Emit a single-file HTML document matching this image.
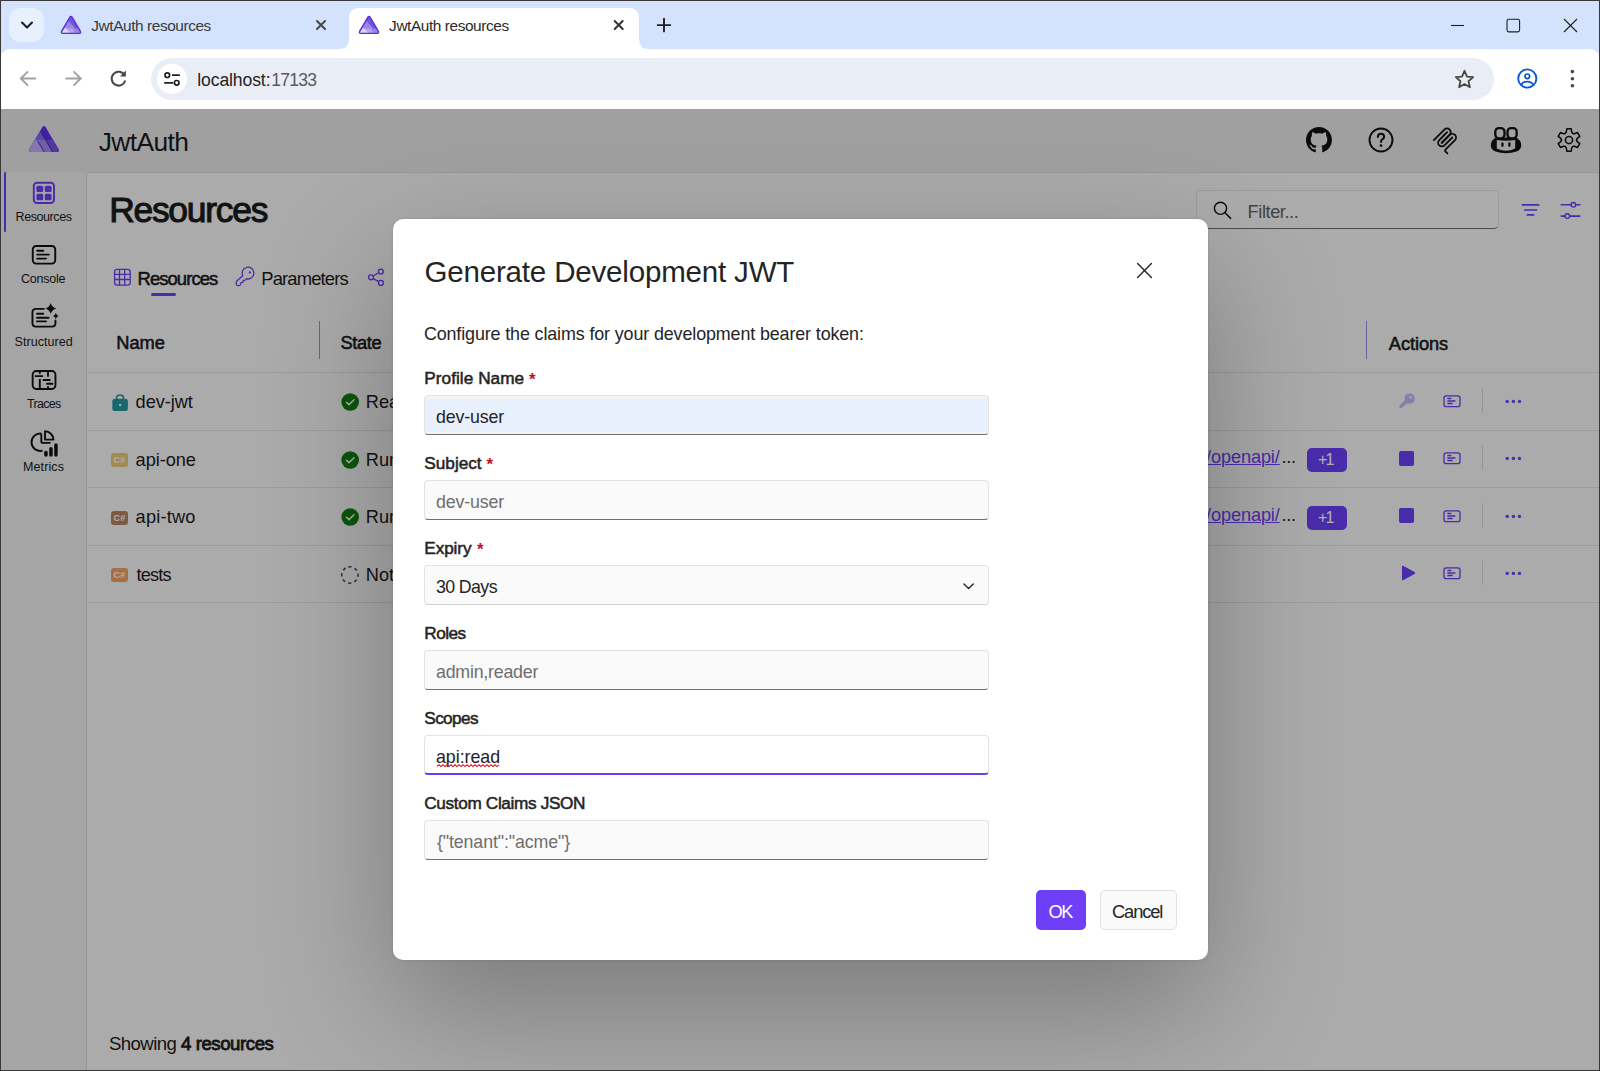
<!DOCTYPE html><html><head><meta charset='utf-8'><title>JwtAuth resources</title><style>
*{box-sizing:border-box;margin:0;padding:0}
html,body{width:1600px;height:1071px;overflow:hidden;background:#fff;font-family:"Liberation Sans",sans-serif}
.a{position:absolute}
.t{position:absolute;white-space:pre}
svg{position:absolute;overflow:visible}
</style></head><body><div class=a style='left:0;top:0;width:1600px;height:70px;background:#d3e3fd'></div><div class=a style='left:9px;top:8px;width:35px;height:34px;border-radius:12px;background:#e8f0fe'></div><svg style='left:0;top:0' width=60 height=50><path d='M22 22.6 L27 27.6 L32 22.6' fill=none stroke='#1f1f1f' stroke-width=2.1 stroke-linecap=round stroke-linejoin=round /></svg><svg style='left:60px;top:15px' width=22 height=20 viewBox='0 0 22 20'><defs><clipPath id='fc60'><path d='M9.9 2.2 Q11 0.4 12.1 2.2 L20.4 16.4 Q21.2 18.3 19.1 18.3 L2.9 18.3 Q0.8 18.3 1.6 16.4 Z' /></clipPath></defs><g clip-path='url(#fc60)'><rect x=0 y=0 width=22 height=20 fill='#7352e2' /><rect x=0 y=13.5 width=22 height=7 fill='#9a82ea' /><path d='M8.6 6 L15.2 13.5 L0 20 L0 13 Z' fill='#9c84ea' /><path d='M4 13.5 L12.6 13.5 L16.6 20 L0 20 Z' fill='#b6a6f0' /><path d='M5.2 12.6 L11.8 20 L0 20 Z' fill='#ddd4f8' /></g><path d='M9.9 2.2 Q11 0.4 12.1 2.2 L20.4 16.4 Q21.2 18.3 19.1 18.3 L2.9 18.3 Q0.8 18.3 1.6 16.4 Z' fill=none stroke='#5530d8' stroke-width=1.35 /></svg><span class=t style="left:91.30px;top:17.56px;font-size:15.4px;line-height:15.4px;font-weight:400;color:#3a3a3a;letter-spacing:-0.412px;">JwtAuth resources</span><svg style='left:0;top:0' width=340 height=50><path d='M317 21 L325 29 M325 21 L317 29' stroke='#474747' stroke-width=2 stroke-linecap=round /></svg><svg style='left:330px;top:0' width=330 height=50 viewBox='330 0 330 50'><path d='M339 49 Q349 49 349 39 L349 18 Q349 8 359 8 L629 8 Q639 8 639 18 L639 39 Q639 49 649 49 Z' fill='#fff' /></svg><svg style='left:358px;top:15px' width=22 height=20 viewBox='0 0 22 20'><defs><clipPath id='fc358'><path d='M9.9 2.2 Q11 0.4 12.1 2.2 L20.4 16.4 Q21.2 18.3 19.1 18.3 L2.9 18.3 Q0.8 18.3 1.6 16.4 Z' /></clipPath></defs><g clip-path='url(#fc358)'><rect x=0 y=0 width=22 height=20 fill='#7352e2' /><rect x=0 y=13.5 width=22 height=7 fill='#9a82ea' /><path d='M8.6 6 L15.2 13.5 L0 20 L0 13 Z' fill='#9c84ea' /><path d='M4 13.5 L12.6 13.5 L16.6 20 L0 20 Z' fill='#b6a6f0' /><path d='M5.2 12.6 L11.8 20 L0 20 Z' fill='#ddd4f8' /></g><path d='M9.9 2.2 Q11 0.4 12.1 2.2 L20.4 16.4 Q21.2 18.3 19.1 18.3 L2.9 18.3 Q0.8 18.3 1.6 16.4 Z' fill=none stroke='#5530d8' stroke-width=1.35 /></svg><span class=t style="left:389.10px;top:17.56px;font-size:15.4px;line-height:15.4px;font-weight:400;color:#2a2a2a;letter-spacing:-0.412px;">JwtAuth resources</span><svg style='left:0;top:0' width=700 height=50><path d='M614.7 21 L622.7 29 M622.7 21 L614.7 29' stroke='#333' stroke-width=2 stroke-linecap=round /></svg><svg style='left:0;top:0' width=700 height=50><path d='M664 18.8 L664 31.4 M657.7 25.1 L670.3 25.1' stroke='#1f1f1f' stroke-width=1.9 stroke-linecap=round /></svg><svg style='left:1400px;top:0' width=200 height=50 viewBox='1400 0 200 50'><path d='M1451 25.5 L1464 25.5' stroke='#1f1f1f' stroke-width=1.1 /><rect x=1507 y=19.3 width=12.6 height=12.6 rx=1.8 fill=none stroke='#1f1f1f' stroke-width=1.1 /><path d='M1564 19 L1577 32 M1577 19 L1564 32' stroke='#1f1f1f' stroke-width=1.1 /></svg><div class=a style='left:0;top:49px;width:1600px;height:60px;background:#fff;border-radius:10px 10px 0 0'></div><svg style='left:0;top:49px' width=150 height=60 viewBox='0 49 150 60'><path d='M21 78.5 L36 78.5 M28 71.3 L20.8 78.5 L28 85.7' fill=none stroke='#a1a1a1' stroke-width=1.9 stroke-linejoin=miter /><path d='M80.5 78.5 L65.5 78.5 M73.5 71.3 L80.7 78.5 L73.5 85.7' fill=none stroke='#a1a1a1' stroke-width=1.9 /><path d='M124.6 75.2 A6.9 6.9 0 1 0 125.3 80.5' fill=none stroke='#474747' stroke-width=2 /><path d='M125.9 70.6 L125.9 76.4 L120.1 76.4 Z' fill='#474747' /></svg><div class=a style='left:151px;top:58px;width:1343px;height:42px;border-radius:21px;background:#e9eef6'></div><div class=a style='left:157px;top:64px;width:30px;height:30px;border-radius:15px;background:#fff'></div><svg style='left:150px;top:60px' width=40 height=40 viewBox='150 60 40 40'><circle cx=167.3 cy=75.2 r=2.3 fill=none stroke='#1f1f1f' stroke-width=1.7 /><path d='M172 75.2 L179.8 75.2 M164.2 82.8 L173.2 82.8' stroke='#1f1f1f' stroke-width=1.8 /><circle cx=176.7 cy=82.8 r=2.3 fill=none stroke='#1f1f1f' stroke-width=1.7 /></svg><span class=t style="left:197.30px;top:71.80px;font-size:17.6px;line-height:17.6px;font-weight:400;color:#1f1f1f;letter-spacing:-0.122px;">localhost:</span><span class=t style="left:271.20px;top:71.80px;font-size:17.6px;line-height:17.6px;font-weight:400;color:#5a5a5a;letter-spacing:-0.800px;">17133</span><svg style='left:1440px;top:60px' width=50 height=40 viewBox='1440 60 50 40'><path d='M1464.5 70.8 L1467 76.6 L1473.2 77.1 L1468.5 81.2 L1469.9 87.3 L1464.5 84.1 L1459.1 87.3 L1460.5 81.2 L1455.8 77.1 L1462 76.6 Z' fill=none stroke='#474747' stroke-width=1.8 stroke-linejoin=round /></svg><svg style='left:1500px;top:60px' width=100 height=40 viewBox='1500 60 100 40'><circle cx=1527.3 cy=78.5 r=9.1 fill=none stroke='#0b57d0' stroke-width=1.9 /><circle cx=1527.3 cy=76.3 r=2.3 fill=none stroke='#0b57d0' stroke-width=1.7 /><path d='M1521.3 84.8 Q1523 81.6 1527.3 81.6 Q1531.6 81.6 1533.3 84.8' fill=none stroke='#0b57d0' stroke-width=1.7 /><circle cx=1572.4 cy=71.6 r=1.8 fill='#474747' /><circle cx=1572.4 cy=78.7 r=1.8 fill='#474747' /><circle cx=1572.4 cy=85.7 r=1.8 fill='#474747' /></svg><div class=a style='left:0;top:109px;width:1600px;height:962px;background:#e5e5e5'></div><div class=a style='left:0;top:172px;width:87px;height:899px;background:#ececec'></div><div class=a style='left:86px;top:172px;width:1514px;height:899px;background:#f5f5f5;border-left:1px solid #d8d8d8;border-top:1px solid #d8d8d8'></div><svg style='left:24px;top:120px' width=40 height=36 viewBox='24 120 40 36'><defs><clipPath id='lg'><path d='M42.3 127.2 Q44 124.6 45.7 127.2 L58.6 149.2 Q59.9 151.9 57 151.9 L31 151.9 Q28.1 151.9 29.4 149.2 Z' /></clipPath></defs><g clip-path='url(#lg)'><rect x=24 y=120 width=40 height=36 fill='#5a30e8' /><rect x=24 y=139.8 width=40 height=16 fill='#7650e6' /><path d='M38.8 133.6 Q40.3 131.2 41.9 133.6 L53 152.5 L20 152.5 Z' fill='#8066ee' /><path d='M31 139.8 L45.3 139.8 L52.7 152.5 L20 152.5 Z' fill='#9e88ee' /><path d='M34.7 141 Q36.1 138.8 37.6 141 L44.6 152.5 L20 152.5 Z' fill='#c0acf6' /><path d='M41.9 133.6 L53 152.5 M37.6 141 L44.6 152.5' fill=none stroke='#3a2290' stroke-width=0.9 /></g></svg><span class=t style="left:98.70px;top:129.35px;font-size:26.4px;line-height:26.4px;font-weight:400;color:#1a1a1a;letter-spacing:-0.617px;">JwtAuth</span><svg style='left:1306px;top:127px' width=26 height=26 viewBox='0 0 16 16'><path fill='#111' d='M8 0C3.58 0 0 3.58 0 8c0 3.54 2.29 6.53 5.470 7.59.4.07.55-.17.55-.38 0-.19-.01-.82-.01-1.49-2.01.37-2.53-.49-2.69-.94-.09-.23-.48-.94-.82-1.13-.28-.15-.68-.52-.01-.53.63-.01 1.08.58 1.23.82.72 1.21 1.87.87 2.33.66.07-.52.28-.87.51-1.07-1.78-.2-3.64-.89-3.64-3.950 0-.87.31-1.59.82-2.15-.08-.2-.36-1.02.08-2.12 0 0 .67-.21 2.2.82.64-.18 1.32-.27 2-.27.68 0 1.36.09 2 .27 1.53-1.04 2.2-.82 2.2-.82.44 1.1.16 1.92.08 2.12.51.56.82 1.27.82 2.15 0 3.07-1.87 3.75-3.65 3.95.29.25.54.73.54 1.48 0 1.07-.01 1.93-.01 2.2 0 .21.15.46.55.38A8.013 8.013 0 0016 8c0-4.42-3.58-8-8-8z' /></svg><svg style='left:1366px;top:125px' width=30 height=30 viewBox='0 0 30 30'><circle cx=15 cy=15 r=11.5 fill=none stroke='#111' stroke-width=1.9 /><path d='M11.9 12 Q11.9 8.8 15 8.8 Q18.1 8.8 18.1 11.7 Q18.1 13.4 16.3 14.4 Q15 15.1 15 17' fill=none stroke='#111' stroke-width=2 stroke-linecap=round /><circle cx=15 cy=20.6 r=1.35 fill='#111' /></svg><svg style='left:1429.6px;top:124.9px' width=30.2 height=30.2 viewBox='0 0 195 195'><g fill=none stroke='#111' stroke-width=12 stroke-linecap=round><path d='M25 97.85L92.88 29.97C102.26 20.6 117.45 20.6 126.82 29.97C136.2 39.34 136.2 54.54 126.82 63.91L75.56 115.18' /><path d='M76.27 114.47L126.82 63.91C136.2 54.54 151.39 54.54 160.77 63.91L161.12 64.27C170.49 73.64 170.49 88.83 161.12 98.21L99.72 159.6C96.6 162.72 96.6 167.79 99.72 170.91L112.33 183.52' /><path d='M109.85 46.94L59.65 97.15C50.28 106.52 50.28 121.71 59.65 131.09C69.02 140.46 84.22 140.46 93.59 131.09L143.79 80.88' /></g></svg><svg style='left:1486px;top:120px' width=40 height=40 viewBox='1486 120 40 40'><path fill='#111' d='M1496 137.6 L1516 137.6 Q1521.2 140.2 1521.2 145.4 Q1521.2 149.4 1516.4 151.4 Q1511.4 153.2 1506 153.2 Q1500.6 153.2 1495.6 151.4 Q1490.8 149.4 1490.8 145.4 Q1490.8 140.2 1496 137.6 Z' /><path fill='#e5e5e5' d='M1496.8 140 Q1506 141.6 1515.2 140 L1515.2 148.6 Q1510.6 150.8 1506 150.8 Q1501.4 150.8 1496.8 148.6 Z' /><rect x=1495.3 y=128.1 width=9.2 height=10.2 rx=3.6 fill='#e5e5e5' stroke='#111' stroke-width=2.3 /><rect x=1507.5 y=128.1 width=9.2 height=10.2 rx=3.6 fill='#e5e5e5' stroke='#111' stroke-width=2.3 /><rect x=1501.3 y=142.3 width=2.3 height=4.6 rx=1.15 fill='#111' /><rect x=1508.2 y=142.3 width=2.3 height=4.6 rx=1.15 fill='#111' /></svg><svg style='left:1549px;top:120px' width=40 height=40 viewBox='-20 -20 40 40'><path fill=none stroke='#111' stroke-width=1.55 stroke-linejoin=round d='M-2.73 -7.94 L-2.18 -11.19 L2.18 -11.19 L2.73 -7.94 Q3.40 -5.89 5.51 -6.34 L5.51 -6.34 L8.60 -7.48 L10.78 -3.71 L8.25 -1.60 Q6.80 0.00 8.25 1.60 L8.25 1.60 L10.78 3.71 L8.60 7.48 L5.51 6.34 Q3.40 5.89 2.73 7.94 L2.73 7.94 L2.18 11.19 L-2.18 11.19 L-2.73 7.94 Q-3.40 5.89 -5.51 6.34 L-5.51 6.34 L-8.60 7.48 L-10.78 3.71 L-8.25 1.60 Q-6.80 0.00 -8.25 -1.60 L-8.25 -1.60 L-10.78 -3.71 L-8.60 -7.48 L-5.51 -6.34 Q-3.40 -5.89 -2.73 -7.94 Z' /><circle cx=0 cy=0 r=3.6 fill=none stroke='#111' stroke-width=1.55 /></svg><div class=a style='left:4px;top:172px;width:2px;height:60px;border-radius:1px;background:#6b3ef5'></div><svg style='left:32px;top:181px' width=24 height=24 viewBox='0 0 24 24'><rect x=1.8 y=1.8 width=20.2 height=20.2 rx=3.3 fill=none stroke='#6b3ef5' stroke-width=1.9 /><rect x=4.4 y=4.7 width=6.8 height=6.3 rx=1.6 fill='#6b3ef5' /><rect x=12.8 y=4.7 width=6.8 height=6.3 rx=1.6 fill='#6b3ef5' /><rect x=4.4 y=12.8 width=6.8 height=6.5 rx=1.6 fill='#6b3ef5' /><rect x=12.8 y=12.8 width=6.8 height=6.5 rx=1.6 fill='#6b3ef5' /></svg><span class=t style="left:15.60px;top:211.42px;font-size:12.5px;line-height:12.5px;font-weight:400;color:#1a1a1a;letter-spacing:-0.425px;">Resources</span><svg style='left:30px;top:243px' width=30 height=24 viewBox='30 243 30 24'><rect x=32.75 y=246 width=22.5 height=17.6 rx=3.5 fill=none stroke='#111' stroke-width=1.9 /><path d='M37.2 250.7 L43.3 250.7 M37.2 254.6 L48.8 254.6 M37.2 258.6 L46 258.6' stroke='#111' stroke-width=1.9 stroke-linecap=round /></svg><span class=t style="left:20.90px;top:273.12px;font-size:12.5px;line-height:12.5px;font-weight:400;color:#1a1a1a;letter-spacing:-0.217px;">Console</span><svg style='left:28px;top:300px' width=34 height=30 viewBox='28 300 34 30'><path d='M43.8 308.85 L36 308.85 Q32.45 308.85 32.45 312.4 L32.45 323.1 Q32.45 326.65 36 326.65 L51.9 326.65 Q55.45 326.65 55.45 323.1 L55.45 320.4' fill=none stroke='#111' stroke-width=1.9 stroke-linecap=round /><path d='M37 313.8 L43.3 313.8 M37 317.7 L48.6 317.7 M37 321.4 L46 321.4' stroke='#111' stroke-width=1.9 stroke-linecap=round /><path d='M50.7 302.9 Q51.9 307.2 56.3 308.4 Q51.9 309.6 50.7 313.8 Q49.5 309.6 45.2 308.4 Q49.5 307.2 50.7 302.9 Z' fill='#111' /><path d='M55.8 313.1 Q56.5 315.5 58.8 316.1 Q56.5 316.7 55.8 319 Q55.1 316.7 52.9 316.1 Q55.1 315.5 55.8 313.1 Z' fill='#111' /></svg><span class=t style="left:14.50px;top:336.42px;font-size:12.5px;line-height:12.5px;font-weight:400;color:#1a1a1a;letter-spacing:0.056px;">Structured</span><svg style='left:30px;top:368px' width=30 height=24 viewBox='30 368 30 24'><rect x=32.65 y=371.05 width=22.8 height=17.9 rx=3.6 fill=none stroke='#111' stroke-width=1.9 /><path d='M39.8 371.5 L39.8 373.8 M39.8 379.1 L39.8 388.5 M48 371.5 L48 376.8 M48 386.2 L48 388.5' stroke='#111' stroke-width=1.9 /><path d='M35.6 376.1 L42.4 376.1 M43.4 380 L49.8 380 M47 383.8 L52.4 383.8' stroke='#111' stroke-width=1.9 stroke-linecap=round /></svg><span class=t style="left:27.00px;top:398.42px;font-size:12.5px;line-height:12.5px;font-weight:400;color:#1a1a1a;letter-spacing:-0.720px;">Traces</span><svg style='left:30px;top:426px' width=32 height=32 viewBox='30 426 32 32'><path d='M41.3 433.6 A8.7 8.7 0 1 0 42.6 450.6' fill=none stroke='#111' stroke-width=1.9 stroke-linecap=butt /><path d='M41.3 433.6 L41.3 441.2 Q41.3 442.9 43 442.9 L50.6 442.9' fill=none stroke='#111' stroke-width=1.9 stroke-linejoin=round /><path d='M45 431.3 L45 439.6 L53.4 439.6 A8.4 8.4 0 0 0 45 431.3 Z' fill=none stroke='#111' stroke-width=1.9 stroke-linejoin=round /><rect x=44.2 y=450.8 width=3.5 height=5.9 rx=1.75 fill='#111' /><rect x=49.2 y=447 width=3.5 height=9.7 rx=1.75 fill='#111' /><rect x=54.2 y=443.2 width=3.5 height=13.5 rx=1.75 fill='#111' /></svg><span class=t style="left:23.00px;top:461.22px;font-size:12.5px;line-height:12.5px;font-weight:400;color:#1a1a1a;letter-spacing:0.100px;">Metrics</span><span class=t style="left:109.20px;top:192.63px;font-size:35.4px;line-height:35.4px;font-weight:400;-webkit-text-stroke:1.06px #1a1a1a;color:#1a1a1a;letter-spacing:-1.250px;">Resources</span><div class=a style='left:1196px;top:190px;width:303px;height:39px;border-radius:5px;background:#f7f7f7;border:1px solid #e0e0e0;border-bottom:1px solid #6b6b6b'></div><svg style='left:1210px;top:199px' width=26 height=26 viewBox='1210 199 26 26'><circle cx=1220.5 cy=208.3 r=6.1 fill=none stroke='#111' stroke-width=1.4 /><path d='M1225 212.8 L1230.6 218.4' stroke='#111' stroke-width=1.5 stroke-linecap=round /></svg><span class=t style="left:1247.60px;top:203.19px;font-size:18.2px;line-height:18.2px;font-weight:400;color:#616161;letter-spacing:-0.425px;">Filter...</span><svg style='left:1515px;top:198px' width=70 height=26 viewBox='1515 198 70 26'><path d='M1522.4 204.8 L1538.7 204.8 M1524.8 210 L1536.4 210 M1527.4 214.9 L1533.6 214.9' stroke='#6b3ef5' stroke-width=1.7 stroke-linecap=round /><path d='M1561.2 204.8 L1570.9 204.8 M1575.9 204.8 L1579.9 204.8 M1561.2 216.1 L1564.8 216.1 M1569.8 216.1 L1579.9 216.1' stroke='#6b3ef5' stroke-width=1.6 stroke-linecap=round /><circle cx=1573.4 cy=204.8 r=2.3 fill=none stroke='#6b3ef5' stroke-width=1.4 /><circle cx=1567.3 cy=216.1 r=2.3 fill=none stroke='#6b3ef5' stroke-width=1.4 /></svg><svg style='left:110px;top:265px' width=150 height=25 viewBox='110 265 150 25'><rect x=114.6 y=269.3 width=15.6 height=15.9 rx=2.6 fill=none stroke='#6b3ef5' stroke-width=1.3 /><path d='M119.5 269.5 L119.5 285 M124.7 269.5 L124.7 285 M114.8 274.3 L130 274.3 M114.8 279.5 L130 279.5' stroke='#6b3ef5' stroke-width=1.3 /></svg><span class=t style="left:137.50px;top:270.12px;font-size:18.4px;line-height:18.4px;font-weight:400;-webkit-text-stroke:0.55px #1a1a1a;color:#1a1a1a;letter-spacing:-0.900px;">Resources</span><div class=a style='left:151px;top:293px;width:25px;height:3px;border-radius:1.5px;background:#6b3ef5'></div><svg style='left:232px;top:264px' width=26 height=26 viewBox='232 264 26 26'><path d='M242.7 275.7 A5.9 5.9 0 1 1 246.5 278.8 L245.3 280.1 L243.3 280.3 L243 282.4 L240.9 282.6 L240.6 284.4 Q240.2 285.7 238.9 285.7 L237.8 285.7 Q236.3 285.5 236.2 284 L236.2 282.5 Q236.3 281.7 236.9 281.1 Z' fill=none stroke='#6b3ef5' stroke-width=1.3 stroke-linejoin=round /><circle cx=249.9 cy=272.5 r=1.15 fill='#6b3ef5' /></svg><span class=t style="left:261.30px;top:270.12px;font-size:18.4px;line-height:18.4px;font-weight:400;color:#1a1a1a;letter-spacing:-0.856px;">Parameters</span><svg style='left:365px;top:264px' width=24 height=26 viewBox='365 264 24 26'><circle cx=380.9 cy=271.5 r=2.45 fill=none stroke='#6b3ef5' stroke-width=1.3 /><circle cx=371 cy=277.3 r=2.45 fill=none stroke='#6b3ef5' stroke-width=1.3 /><circle cx=380.9 cy=282.9 r=2.45 fill=none stroke='#6b3ef5' stroke-width=1.3 /><path d='M373.2 276 L378.7 272.8 M373.2 278.6 L378.7 281.6' stroke='#6b3ef5' stroke-width=1.3 /></svg><span class=t style="left:116.30px;top:334.41px;font-size:18.3px;line-height:18.3px;font-weight:400;-webkit-text-stroke:0.55px #1a1a1a;color:#1a1a1a;letter-spacing:-0.033px;">Name</span><div class=a style='left:319px;top:321px;width:1px;height:38px;background:#9c86e8'></div><span class=t style="left:340.50px;top:334.41px;font-size:18.3px;line-height:18.3px;font-weight:400;-webkit-text-stroke:0.55px #1a1a1a;color:#1a1a1a;letter-spacing:-0.400px;">State</span><div class=a style='left:1366px;top:321px;width:1px;height:38px;background:#9c86e8'></div><span class=t style="left:1388.80px;top:334.51px;font-size:18.3px;line-height:18.3px;font-weight:400;-webkit-text-stroke:0.55px #1a1a1a;color:#1a1a1a;letter-spacing:-0.083px;">Actions</span><div class=a style='left:87px;top:372.0px;width:1513px;height:1px;background:#dedede'></div><div class=a style='left:87px;top:429.5px;width:1513px;height:1px;background:#dedede'></div><div class=a style='left:87px;top:487.0px;width:1513px;height:1px;background:#dedede'></div><div class=a style='left:87px;top:544.5px;width:1513px;height:1px;background:#dedede'></div><div class=a style='left:87px;top:602.0px;width:1513px;height:1px;background:#dedede'></div><svg style='left:100px;top:382.5px' width=40 height=40 viewBox='100 382.5 40 40'><path d='M116.6 398.7 L116.6 397.1 Q116.6 394.5 120 394.5 Q123.4 394.5 123.4 397.1 L123.4 398.7' fill=none stroke='#25969c' stroke-width=1.7 /><rect x=112.3 y=398.2 width=15.6 height=12.4 rx=2.8 fill='#25969c' /><circle cx=120.1 cy=404.5 r=1.25 fill='#f5f5f5' /></svg><span class=t style="left:135.60px;top:393.09px;font-size:18.2px;line-height:18.2px;font-weight:400;color:#1a1a1a;letter-spacing:-0.067px;">dev-jwt</span><svg style='left:336px;top:388.0px' width=28 height=28 viewBox='336 388.0 28 28'><circle cx=350.2 cy=402.0 r=8.8 fill='#107c10' /><path d='M346.4 402.2 L349 404.6 L354 399.7' fill=none stroke='#f5f5f5' stroke-width=1.5 stroke-linecap=round stroke-linejoin=round /></svg><span class=t style="left:365.80px;top:393.09px;font-size:18.2px;line-height:18.2px;font-weight:400;color:#1a1a1a;letter-spacing:0.000px;">Ready</span><svg style='left:1390px;top:386.7px' width=30 height=28 viewBox='1390 386.7 30 28'><path d='M1409.6 393.09999999999997 Q1414.6 393.09999999999997 1414.6 398.09999999999997 Q1414.6 403.09999999999997 1409.6 403.09999999999997 Q1408.6 403.09999999999997 1407.8 402.7 L1406.4 404.09999999999997 L1404.6 404.3 L1404.4 406.09999999999997 L1402.6 406.3 L1401.6 407.5 Q1400.2 408.5 1399.4 407.3 Q1398.8 406.3 1399.6 405.3 L1404.9 399.9 Q1404.6 399.09999999999997 1404.6 398.09999999999997 Q1404.6 393.09999999999997 1409.6 393.09999999999997 Z' fill='#c2b2f4' /><circle cx=1410.6 cy=396.9 r=1.3 fill='#f5f5f5' /></svg><svg style='left:1438px;top:388.7px' width=28 height=24 viewBox='1438 388.7 28 24'><rect x=1444 y=395.5 width=16 height=10.8 rx=2.2 fill=none stroke='#6b3ef5' stroke-width=1.3 /><path d='M1447.4 398.09999999999997 L1451.4 398.09999999999997 M1447.4 400.7 L1455.4 400.7 M1447.4 403.09999999999997 L1452.6 403.09999999999997' stroke='#6b3ef5' stroke-width=1.5 /></svg><div class=a style='left:1482px;top:388.2px;width:1px;height:24.6px;background:#d4d4d4'></div><svg style='left:1500px;top:395.7px' width=30 height=10 viewBox='1500 395.7 30 10'><circle cx=1507.2 cy=401.09999999999997 r=1.7 fill='#6b3ef5' /><circle cx=1513.4 cy=401.09999999999997 r=1.7 fill='#6b3ef5' /><circle cx=1519.5 cy=401.09999999999997 r=1.7 fill='#6b3ef5' /></svg><div class=a style='left:111px;top:453.0px;width:16.8px;height:14px;border-radius:3px;background:#e9c872'></div><div class=a style='left:111px;top:453.0px;width:16.8px;height:14px;font:bold 9px/14px "Liberation Sans";color:#fafafa;text-align:center;letter-spacing:.2px'>C#</div><span class=t style="left:135.60px;top:450.59px;font-size:18.2px;line-height:18.2px;font-weight:400;color:#1a1a1a;letter-spacing:-0.050px;">api-one</span><svg style='left:336px;top:445.5px' width=28 height=28 viewBox='336 445.5 28 28'><circle cx=350.2 cy=459.5 r=8.8 fill='#107c10' /><path d='M346.4 459.7 L349 462.1 L354 457.2' fill=none stroke='#f5f5f5' stroke-width=1.5 stroke-linecap=round stroke-linejoin=round /></svg><span class=t style="left:365.80px;top:450.59px;font-size:18.2px;line-height:18.2px;font-weight:400;color:#1a1a1a;letter-spacing:0.000px;">Running</span><div class=a style='left:1399.3px;top:450.59999999999997px;width:15.2px;height:15px;border-radius:2px;background:#6b3ef5'></div><svg style='left:1438px;top:446.2px' width=28 height=24 viewBox='1438 446.2 28 24'><rect x=1444 y=453.0 width=16 height=10.8 rx=2.2 fill=none stroke='#6b3ef5' stroke-width=1.3 /><path d='M1447.4 455.59999999999997 L1451.4 455.59999999999997 M1447.4 458.2 L1455.4 458.2 M1447.4 460.59999999999997 L1452.6 460.59999999999997' stroke='#6b3ef5' stroke-width=1.5 /></svg><div class=a style='left:1482px;top:445.7px;width:1px;height:24.6px;background:#d4d4d4'></div><svg style='left:1500px;top:453.2px' width=30 height=10 viewBox='1500 453.2 30 10'><circle cx=1507.2 cy=458.59999999999997 r=1.7 fill='#6b3ef5' /><circle cx=1513.4 cy=458.59999999999997 r=1.7 fill='#6b3ef5' /><circle cx=1519.5 cy=458.59999999999997 r=1.7 fill='#6b3ef5' /></svg><span class=t style="left:1206.00px;top:448.29px;font-size:18.2px;line-height:18.2px;font-weight:400;color:#6b3ef5;letter-spacing:-0.125px;text-decoration:underline;text-underline-offset:1px;text-decoration-thickness:1px">/openapi/</span><span class=t style="left:1281.60px;top:448.29px;font-size:18.2px;line-height:18.2px;font-weight:400;color:#1a1a1a;letter-spacing:-0.300px;">...</span><div class=a style='left:1307px;top:448.0px;width:40px;height:24px;border-radius:5px;background:#6b3ef5'></div><span class=t style="left:1318.00px;top:452.46px;font-size:16px;line-height:16px;font-weight:400;color:#fff;letter-spacing:-1.800px;">+1</span><div class=a style='left:111px;top:510.5px;width:16.8px;height:14px;border-radius:3px;background:#b3815b'></div><div class=a style='left:111px;top:510.5px;width:16.8px;height:14px;font:bold 9px/14px "Liberation Sans";color:#fafafa;text-align:center;letter-spacing:.2px'>C#</div><span class=t style="left:135.60px;top:508.09px;font-size:18.2px;line-height:18.2px;font-weight:400;color:#1a1a1a;letter-spacing:0.183px;">api-two</span><svg style='left:336px;top:503.0px' width=28 height=28 viewBox='336 503.0 28 28'><circle cx=350.2 cy=517.0 r=8.8 fill='#107c10' /><path d='M346.4 517.2 L349 519.6 L354 514.7' fill=none stroke='#f5f5f5' stroke-width=1.5 stroke-linecap=round stroke-linejoin=round /></svg><span class=t style="left:365.80px;top:508.09px;font-size:18.2px;line-height:18.2px;font-weight:400;color:#1a1a1a;letter-spacing:0.000px;">Running</span><div class=a style='left:1399.3px;top:508.1px;width:15.2px;height:15px;border-radius:2px;background:#6b3ef5'></div><svg style='left:1438px;top:503.70000000000005px' width=28 height=24 viewBox='1438 503.70000000000005 28 24'><rect x=1444 y=510.50000000000006 width=16 height=10.8 rx=2.2 fill=none stroke='#6b3ef5' stroke-width=1.3 /><path d='M1447.4 513.1 L1451.4 513.1 M1447.4 515.7 L1455.4 515.7 M1447.4 518.1 L1452.6 518.1' stroke='#6b3ef5' stroke-width=1.5 /></svg><div class=a style='left:1482px;top:503.20000000000005px;width:1px;height:24.6px;background:#d4d4d4'></div><svg style='left:1500px;top:510.70000000000005px' width=30 height=10 viewBox='1500 510.70000000000005 30 10'><circle cx=1507.2 cy=516.1 r=1.7 fill='#6b3ef5' /><circle cx=1513.4 cy=516.1 r=1.7 fill='#6b3ef5' /><circle cx=1519.5 cy=516.1 r=1.7 fill='#6b3ef5' /></svg><span class=t style="left:1206.00px;top:505.79px;font-size:18.2px;line-height:18.2px;font-weight:400;color:#6b3ef5;letter-spacing:-0.125px;text-decoration:underline;text-underline-offset:1px;text-decoration-thickness:1px">/openapi/</span><span class=t style="left:1281.60px;top:505.79px;font-size:18.2px;line-height:18.2px;font-weight:400;color:#1a1a1a;letter-spacing:-0.300px;">...</span><div class=a style='left:1307px;top:505.5px;width:40px;height:24px;border-radius:5px;background:#6b3ef5'></div><span class=t style="left:1318.00px;top:509.96px;font-size:16px;line-height:16px;font-weight:400;color:#fff;letter-spacing:-1.800px;">+1</span><div class=a style='left:111px;top:568.0px;width:16.8px;height:14px;border-radius:3px;background:#f09f63'></div><div class=a style='left:111px;top:568.0px;width:16.8px;height:14px;font:bold 9px/14px "Liberation Sans";color:#fafafa;text-align:center;letter-spacing:.2px'>C#</div><span class=t style="left:136.60px;top:565.59px;font-size:18.2px;line-height:18.2px;font-weight:400;color:#1a1a1a;letter-spacing:-0.875px;">tests</span><svg style='left:336px;top:560.5px' width=28 height=28 viewBox='336 560.5 28 28'><circle cx=349.9 cy=574.5 r=8.2 fill=none stroke='#4a4a4a' stroke-width=1.6 stroke-dasharray='3.2 3.24' transform='rotate(-101 349.9 574.5)' /></svg><span class=t style="left:365.80px;top:565.59px;font-size:18.2px;line-height:18.2px;font-weight:400;color:#1a1a1a;letter-spacing:0.000px;">Not started</span><svg style='left:1396px;top:561.2px' width=24 height=24 viewBox='1396 561.2 24 24'><path d='M1402 567.0 Q1402 565.4000000000001 1403.5 566.2 L1414.6 572.3000000000001 Q1416 573.2 1414.6 574.1 L1403.5 580.2 Q1402 581.0 1402 579.4000000000001 Z' fill='#6b3ef5' /></svg><svg style='left:1438px;top:561.2px' width=28 height=24 viewBox='1438 561.2 28 24'><rect x=1444 y=568.0 width=16 height=10.8 rx=2.2 fill=none stroke='#6b3ef5' stroke-width=1.3 /><path d='M1447.4 570.6 L1451.4 570.6 M1447.4 573.2 L1455.4 573.2 M1447.4 575.6 L1452.6 575.6' stroke='#6b3ef5' stroke-width=1.5 /></svg><div class=a style='left:1482px;top:560.7px;width:1px;height:24.6px;background:#d4d4d4'></div><svg style='left:1500px;top:568.2px' width=30 height=10 viewBox='1500 568.2 30 10'><circle cx=1507.2 cy=573.6 r=1.7 fill='#6b3ef5' /><circle cx=1513.4 cy=573.6 r=1.7 fill='#6b3ef5' /><circle cx=1519.5 cy=573.6 r=1.7 fill='#6b3ef5' /></svg><span class=t style="left:109.00px;top:1035.26px;font-size:18.6px;line-height:18.6px;font-weight:400;color:#1a1a1a;letter-spacing:-0.571px;">Showing </span><span class=t style="left:181.00px;top:1035.26px;font-size:18.6px;line-height:18.6px;font-weight:400;-webkit-text-stroke:0.56px #1a1a1a;color:#1a1a1a;letter-spacing:-0.430px;-webkit-text-stroke:0.8px #1a1a1a">4 resources</span><div class=a style='left:0;top:109px;width:1600px;height:962px;background:rgba(0,0,0,0.3)'></div><div class=a style='left:393px;top:219px;width:815px;height:741px;border-radius:10px;background:#fff;box-shadow:0 0 3px rgba(0,0,0,.12),0 48px 130px rgba(0,0,0,.29)'></div><span class=t style="left:424.50px;top:256.53px;font-size:29.5px;line-height:29.5px;font-weight:400;color:#242424;letter-spacing:-0.174px;">Generate Development JWT</span><svg style='left:1130px;top:256px' width=30 height=30 viewBox='1130 256 30 30'><path d='M1137.6 263.6 L1151.4 277.4 M1151.4 263.6 L1137.6 277.4' stroke='#242424' stroke-width=1.4 stroke-linecap=round /></svg><span class=t style="left:423.90px;top:325.85px;font-size:17.9px;line-height:17.9px;font-weight:400;color:#242424;letter-spacing:-0.120px;">Configure the claims for your development bearer token:</span><span class=t style="left:424.30px;top:369.84px;font-size:17.2px;line-height:17.2px;font-weight:400;-webkit-text-stroke:0.52px #242424;color:#242424;letter-spacing:0.045px;">Profile Name</span><span class=t style='left:529.0px;top:370.5px;font-size:17px;line-height:17px;color:#c50f1f;font-weight:700'>*</span><div class=a style='left:424px;top:395px;width:565px;height:40px;border-radius:4px;background:#f4f4f4;border:1px solid #e3e3e3;border-bottom:1px solid #707070'></div><div class=a style='left:425px;top:399px;width:563px;height:33px;background:#e8f0fe'></div><span class=t style="left:436.00px;top:408.93px;font-size:17.8px;line-height:17.8px;font-weight:400;color:#242424;letter-spacing:-0.143px;">dev-user</span><span class=t style="left:424.30px;top:454.84px;font-size:17.2px;line-height:17.2px;font-weight:400;-webkit-text-stroke:0.52px #242424;color:#242424;letter-spacing:0.000px;">Subject</span><span class=t style='left:486.5px;top:455.5px;font-size:17px;line-height:17px;color:#c50f1f;font-weight:700'>*</span><div class=a style='left:424px;top:480px;width:565px;height:40px;border-radius:4px;background:#fafafa;border:1px solid #e3e3e3;border-bottom:1px solid #707070'></div><span class=t style="left:436.00px;top:493.93px;font-size:17.8px;line-height:17.8px;font-weight:400;color:#6e6e6e;letter-spacing:-0.143px;">dev-user</span><span class=t style="left:424.30px;top:539.84px;font-size:17.2px;line-height:17.2px;font-weight:400;-webkit-text-stroke:0.52px #242424;color:#242424;letter-spacing:-0.100px;">Expiry</span><span class=t style='left:477.0px;top:540.5px;font-size:17px;line-height:17px;color:#c50f1f;font-weight:700'>*</span><div class=a style='left:424px;top:565px;width:565px;height:40px;border-radius:4px;background:#fafafa;border:1px solid #e3e3e3;border-bottom:1px solid #d4d4d4'></div><svg style='left:955px;top:575px' width=24 height=20 viewBox='955 575 24 20'><path d='M963.9 584 L968.6 588.6 L973.3 584' fill=none stroke='#242424' stroke-width=1.35 stroke-linecap=round stroke-linejoin=round /></svg><span class=t style="left:436.00px;top:578.93px;font-size:17.8px;line-height:17.8px;font-weight:400;color:#242424;letter-spacing:-0.617px;">30 Days</span><span class=t style="left:424.30px;top:624.84px;font-size:17.2px;line-height:17.2px;font-weight:400;-webkit-text-stroke:0.52px #242424;color:#242424;letter-spacing:-0.550px;">Roles</span><div class=a style='left:424px;top:650px;width:565px;height:40px;border-radius:4px;background:#fafafa;border:1px solid #e3e3e3;border-bottom:1px solid #707070'></div><span class=t style="left:436.00px;top:663.93px;font-size:17.8px;line-height:17.8px;font-weight:400;color:#6e6e6e;letter-spacing:-0.218px;">admin,reader</span><span class=t style="left:424.30px;top:709.84px;font-size:17.2px;line-height:17.2px;font-weight:400;-webkit-text-stroke:0.52px #242424;color:#242424;letter-spacing:-0.620px;">Scopes</span><div class=a style='left:424px;top:735px;width:565px;height:40px;border-radius:4px;background:#fff;border:1px solid #e3e3e3;border-bottom:2px solid #6b3cf5'></div><span class=t style="left:436.00px;top:748.93px;font-size:17.8px;line-height:17.8px;font-weight:400;color:#242424;letter-spacing:-0.029px;">api:read</span><svg style='left:430px;top:758px' width=80 height=14 viewBox='430 758 80 14'><path d='M437.0 766.3 L439.0 764.8 L441.0 766.6 L443.0 764.8 L445.0 766.6 L447.0 764.8 L449.0 766.6 L451.0 764.8 L453.0 766.6 L455.0 764.8 L457.0 766.6 L459.0 764.8 L461.0 766.6 L463.0 764.8 L465.0 766.6 L467.0 764.8 L469.0 766.6 L471.0 764.8 L473.0 766.6 L475.0 764.8 L477.0 766.6 L479.0 764.8 L481.0 766.6 L483.0 764.8 L485.0 766.6 L487.0 764.8 L489.0 766.6 L491.0 764.8 L493.0 766.6 L495.0 764.8 L497.0 766.6 L499.0 764.8' fill=none stroke='#e81123' stroke-width=1.1 /></svg><span class=t style="left:424.30px;top:794.84px;font-size:17.2px;line-height:17.2px;font-weight:400;-webkit-text-stroke:0.52px #242424;color:#242424;letter-spacing:-0.353px;">Custom Claims JSON</span><div class=a style='left:424px;top:820px;width:565px;height:40px;border-radius:4px;background:#fafafa;border:1px solid #e3e3e3;border-bottom:1px solid #707070'></div><span class=t style="left:437.00px;top:833.93px;font-size:17.8px;line-height:17.8px;font-weight:400;color:#6e6e6e;letter-spacing:-0.119px;">{&quot;tenant&quot;:&quot;acme&quot;}</span><div class=a style='left:1036px;top:890px;width:50px;height:40px;border-radius:5px;background:#6f3ff8'></div><span class=t style="left:1048.50px;top:903.31px;font-size:18.3px;line-height:18.3px;font-weight:400;color:#fff;letter-spacing:-1.500px;">OK</span><div class=a style='left:1099.5px;top:890px;width:77px;height:40px;border-radius:5px;background:#fafafa;border:1px solid #e2e2e2'></div><span class=t style="left:1112.00px;top:903.31px;font-size:18.3px;line-height:18.3px;font-weight:400;color:#242424;letter-spacing:-1.100px;">Cancel</span><div class=a style='left:0;top:0;width:1600px;height:1071px;border:1px solid #383838;border-radius:0'></div></body></html>
